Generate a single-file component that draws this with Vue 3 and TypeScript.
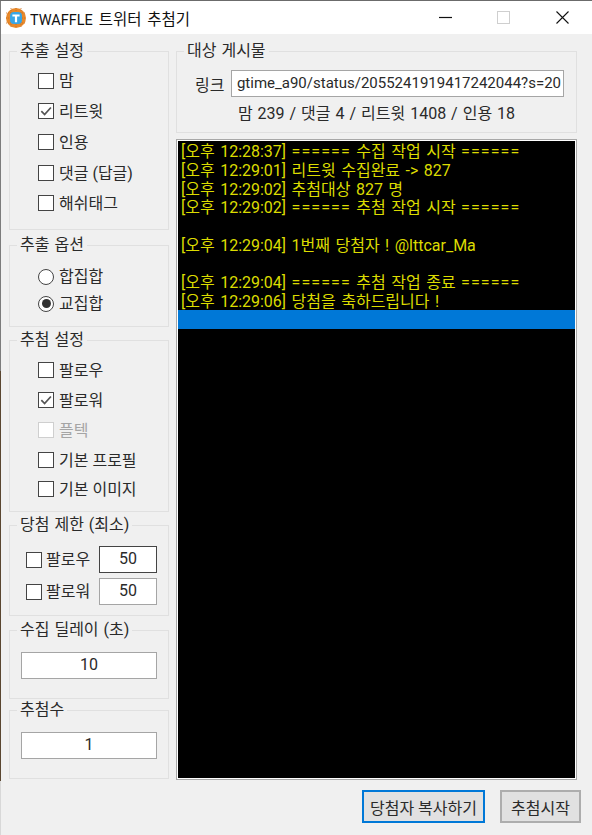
<script setup lang="ts">
const groupOne = [
  { label: '맘', checked: false },
  { label: '리트윗', checked: true },
  { label: '인용', checked: false },
  { label: '댓글 (답글)', checked: false },
  { label: '해쉬태그', checked: false },
]
const groupThree = [
  { label: '팔로우', checked: false, disabled: false },
  { label: '팔로워', checked: true, disabled: false },
  { label: '플텍', checked: false, disabled: true },
  { label: '기본 프로필', checked: false, disabled: false },
  { label: '기본 이미지', checked: false, disabled: false },
]
const logs = [
  { time: '[오후 12:28:37]', text: '수집 작업 시작', banner: true },
  { time: '[오후 12:29:01]', text: '리트윗 수집완료 -> 827', banner: false },
  { time: '[오후 12:29:02]', text: '추첨대상 827 명', banner: false },
  { time: '[오후 12:29:02]', text: '추첨 작업 시작', banner: true },
  { time: '', text: '', banner: false },
  { time: '[오후 12:29:04]', text: '1번째 당첨자 ! @lttcar_Ma', banner: false },
  { time: '', text: '', banner: false },
  { time: '[오후 12:29:04]', text: '추첨 작업 종료', banner: true },
  { time: '[오후 12:29:06]', text: '당첨을 축하드립니다 !', banner: false },
]
</script>

<template>
  <div class="window">
    <header class="titlebar">
      <svg class="logo" viewBox="0 0 20 20">
        <circle cx="10" cy="10" r="10" fill="#e8892b" />
        <path d="M0 5h20M0 10h20M0 15h20M5 0v20M10 0v20M15 0v20" stroke="#c9701f" stroke-width=".8" stroke-dasharray="1 1" />
        <rect x="4" y="4" width="12" height="12" rx="4" fill="#39a6e6" />
        <path d="M6.4 6.4h7.2v2.2h-2.5v5.6H8.9V8.6H6.4z" fill="#fff" />
      </svg>
      <span class="title"><span class="title-latin">TWAFFLE</span> 트위터 추첨기</span>
      <svg class="ctl ctl-min" viewBox="0 0 13 13"><path d="M0 6.5h13" stroke="#111" stroke-width="1.2" /></svg>
      <svg class="ctl ctl-max" viewBox="0 0 13 13"><rect x=".5" y=".5" width="12" height="12" fill="none" stroke="#cfcfcf" /></svg>
      <svg class="ctl ctl-close" viewBox="0 0 13 13"><path d="M.5.5l12 12M12.5.5l-12 12" stroke="#111" stroke-width="1.1" /></svg>
    </header>

    <main class="body">
      <aside class="left">
        <section class="group g1">
          <h2 class="legend">추출 설정</h2>
          <label v-for="item in groupOne" :key="item.label" class="opt">
            <span class="box">
              <svg v-if="item.checked" viewBox="0 0 12 12"><path d="M2 6.2l2.8 2.8L10.2 3" fill="none" stroke="#555" stroke-width="1.5" /></svg>
            </span>
            {{ item.label }}
          </label>
        </section>

        <section class="group g2">
          <h2 class="legend">추출 옵션</h2>
          <label class="opt"><span class="radio"></span>합집합</label>
          <label class="opt"><span class="radio on"></span>교집합</label>
        </section>

        <section class="group g3">
          <h2 class="legend">추첨 설정</h2>
          <label v-for="item in groupThree" :key="item.label" class="opt" :class="{ disabled: item.disabled }">
            <span class="box">
              <svg v-if="item.checked" viewBox="0 0 12 12"><path d="M2 6.2l2.8 2.8L10.2 3" fill="none" stroke="#555" stroke-width="1.5" /></svg>
            </span>
            {{ item.label }}
          </label>
        </section>

        <section class="group g4">
          <h2 class="legend">당첨 제한 (최소)</h2>
          <div class="limit">
            <label class="opt"><span class="box"></span>팔로우</label>
            <div class="field active">50</div>
          </div>
          <div class="limit">
            <label class="opt"><span class="box"></span>팔로워</label>
            <div class="field">50</div>
          </div>
        </section>

        <section class="group g5">
          <h2 class="legend">수집 딜레이 (초)</h2>
          <div class="field wide">10</div>
        </section>

        <section class="group g6">
          <h2 class="legend">추첨수</h2>
          <div class="field wide">1</div>
        </section>
      </aside>

      <div class="right">
        <section class="group target">
          <h2 class="legend">대상 게시물</h2>
          <div class="link-row">
            <span class="link-label">링크</span>
            <div class="link-input"><span>gtime_a90/status/2055241919417242044?s=20</span></div>
          </div>
          <p class="stats">맘 239 / 댓글 4 / 리트윗 1408 / 인용 18</p>
        </section>

        <div class="log">
          <div v-for="(line, i) in logs" :key="i" class="line">
            {{ line.time }}
            <template v-if="line.banner"><span class="eq">======</span> {{ line.text }} <span class="eq">======</span></template>
            <template v-else>{{ line.text }}</template>
          </div>
          <div class="line selected"></div>
        </div>

        <footer class="actions">
          <button class="btn focus" type="button">당첨자 복사하기</button>
          <button class="btn start" type="button">추첨시작</button>
        </footer>
      </div>
    </main>
  </div>
</template>

<style>
html, body { margin: 0; background: #f0f0f0; }
</style>

<style scoped>
.window {
  width: 592px;
  height: 835px;
  box-sizing: border-box;
  overflow: hidden;
  padding-left: 1px;
  background: linear-gradient(#7c7c7c 0 370px, #5a4630 370px 780px, #d8d8d8 780px) left top / 1px 100% no-repeat, #f0f0f0;
  border-top: 1px solid #6b6b6b;
  font-family: Roboto, "Noto Sans CJK KR", sans-serif;
  font-size: 16px;
  color: #2a2a2a;
}
.titlebar {
  height: 33px;
  background: #fff;
  display: flex;
  align-items: center;
  padding-left: 5px;
}
.logo { width: 20px; height: 20px; flex: none; }
.title { margin-left: 4px; font-size: 15.5px; color: #111; word-spacing: 2px; white-space: nowrap; }
.title-latin { font-size: 14.5px; }
.ctl { width: 13px; height: 13px; flex: none; }
.ctl-min { margin-left: auto; }
.ctl-max { margin-left: 45px; }
.ctl-close { margin-left: 46px; margin-right: 23px; }

.body { display: flex; padding-top: 17px; padding-left: 8px; }
.left { width: 160px; flex: none; display: flex; flex-direction: column; }
.right { width: 401px; margin-left: 7px; flex: none; display: flex; flex-direction: column; }

.group {
  position: relative;
  box-sizing: border-box;
  border: 1.5px solid #e0e0e0;
}
.legend {
  position: absolute;
  top: -11px;
  left: 7px;
  margin: 0;
  padding: 0 3px;
  background: #f0f0f0;
  font-size: 16px;
  line-height: 19px;
  font-weight: 400;
  color: #2a2a2a;
  word-spacing: 1px;
  white-space: nowrap;
}
.g1 { height: 179px; padding: 13px 0 0 28px; display: grid; grid-template-rows: 31px 30px 32px 30px 30px; align-content: start; }
.g2 { height: 82px; margin-top: 15px; padding: 17px 0 0 28px; display: grid; grid-template-rows: 27px 27px; align-content: start; }
.g3 { height: 172px; margin-top: 13px; padding: 14px 0 0 28px; display: grid; grid-template-rows: 30px 30px 30px 30px 28px; align-content: start; }
.g4 { height: 91px; margin-top: 13px; padding: 20px 11px 0 16px; display: flex; flex-direction: column; gap: 5px; }
.g5 { height: 69px; margin-top: 14px; padding: 21px 11px 0 11px; }
.g6 { height: 69px; margin-top: 11px; padding: 21px 11px 0 11px; }

.opt {
  display: flex;
  align-items: center;
  gap: 5px;
  white-space: nowrap;
  line-height: 19px;
}
.limit .opt { gap: 4px; }
.opt.disabled { color: #a5a5a5; }
.box {
  width: 16px;
  height: 16px;
  box-sizing: border-box;
  flex: none;
  border: 1.5px solid #444;
  background: #fff;
  display: block;
}
.box svg { display: block; width: 100%; height: 100%; }
.disabled .box { border-color: #cfcfcf; }
.radio {
  width: 16px;
  height: 16px;
  box-sizing: border-box;
  flex: none;
  border: 1.5px solid #444;
  border-radius: 50%;
  background: #fff;
  display: flex;
  align-items: center;
  justify-content: center;
}
.radio.on::after {
  content: "";
  width: 9px;
  height: 9px;
  border-radius: 50%;
  background: #333;
}
.limit { display: flex; justify-content: space-between; align-items: center; height: 27px; }
.field {
  width: 58px;
  height: 27px;
  box-sizing: border-box;
  border: 1.5px solid #a5a5a5;
  background: #fff;
  text-align: center;
  line-height: 24px;
}
.field.active { border-color: #444; }
.field.wide { width: 136px; }

.target { height: 82px; }
.link-row { display: flex; align-items: center; gap: 7px; margin: 18px 12px 0 18px; }
.link-label { flex: none; }
.link-input {
  flex: 1;
  height: 27px;
  box-sizing: border-box;
  border: 1.5px solid #a5a5a5;
  background: #fff;
  line-height: 24px;
  font-size: 15px;
  overflow: hidden;
  white-space: nowrap;
  display: flex;
  justify-content: flex-end;
  padding: 0 2px 0 0;
}
.link-input span { flex: none; }
.stats { margin: 7px 0 0; text-align: center; line-height: 19px; word-spacing: 1px; }

.log {
  margin-top: 6px;
  height: 641px;
  box-sizing: border-box;
  background: #000;
  border: 2px solid #a8a8a8;
  outline: 1px solid #fff;
  outline-offset: -2px;
  overflow: hidden;
}
.line {
  height: 18.78px;
  line-height: 22px;
  padding-left: 3px;
  color: #dcdc00;
  white-space: nowrap;
  word-spacing: 1.5px;
}
.eq { letter-spacing: 1.1px; }
.line.selected { background: #0078d7; height: 19px; }

.actions { display: flex; justify-content: flex-end; gap: 15px; margin-top: 10px; margin-right: -4px; }
.btn {
  height: 33px;
  box-sizing: border-box;
  background: #e1e1e1;
  border: 2px solid #adadad;
  font: inherit;
  color: #2a2a2a;
  padding: 0;
}
.btn.focus { width: 123px; border-color: #0078d7; }
.btn.start { width: 81px; }
</style>
